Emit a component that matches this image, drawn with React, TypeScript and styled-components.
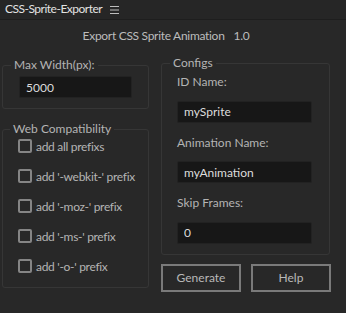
import React, { useState } from "react";
import styled, { createGlobalStyle } from "styled-components";

const GlobalStyle = createGlobalStyle`
  html, body {
    margin: 0;
    padding: 0;
    background: #282828;
  }
  body {
    font-family: Lato, "Open Sans", sans-serif;
    color: #b4b4b4;
  }
`;

const Panel = styled.div`
  width: 346px;
  height: 313px;
  overflow: hidden;
  background: #282828;
`;

const Header = styled.header`
  display: flex;
  align-items: flex-start;
  gap: 8px;
  height: 20px;
  padding: 2px 0 0 5px;
  box-sizing: border-box;
  border-bottom: 1px solid #1e1e1e;
  background: #262626;
`;

const HeaderTitle = styled.span`
  font-size: 12px;
  line-height: 13px;
  letter-spacing: -0.5px;
  color: #e2e2e2;
`;

const MenuIcon = styled.svg`
  margin-top: 4px;
`;

const Title = styled.div`
  display: flex;
  justify-content: center;
  gap: 9px;
  padding: 8px 14px 0 0;
  height: 22px;
  font-size: 12px;
  line-height: 16px;
  letter-spacing: -0.3px;
  color: #bcbcbc;
`;

const Columns = styled.div`
  display: grid;
  grid-template-columns: 147px 169px;
  column-gap: 12px;
  padding: 6px 0 0 2px;
`;

const Column = styled.div<{ $offset?: number }>`
  display: flex;
  flex-direction: column;
  padding-top: ${(p) => p.$offset ?? 0}px;
`;

const Group = styled.fieldset<{ $pad: string }>`
  margin: 0;
  min-width: 0;
  padding: ${(p) => p.$pad};
  border: 1px solid #363636;
  border-radius: 3px;
  display: flex;
  flex-direction: column;
`;

const Legend = styled.legend<{ $shift: number }>`
  margin-left: ${(p) => p.$shift}px;
  padding: 0 3px;
  font-size: 12px;
  line-height: 14px;
  color: #b4b4b4;
`;

const FieldLabel = styled.label`
  display: block;
  height: 20px;
  font-size: 12px;
  line-height: 20px;
  margin-bottom: 8px;
`;

const TextInput = styled.input`
  box-sizing: border-box;
  width: 100%;
  height: 22px;
  padding: 0 6px;
  border: 1px solid #222;
  border-radius: 2px;
  background: #171717;
  color: #dcdcdc;
  font-family: Lato, "Open Sans", sans-serif;
  font-size: 12px;
  outline: none;
`;

const Field = styled.div`
  & + & {
    margin-top: 10px;
  }
`;

const CheckRow = styled.label`
  display: flex;
  align-items: center;
  gap: 4px;
  height: 20px;
  font-size: 12px;
  letter-spacing: -0.3px;
  white-space: nowrap;
  color: #b4b4b4;
  & + & {
    margin-top: 10px;
  }
`;

const Box = styled.span<{ $on: boolean }>`
  flex: none;
  box-sizing: border-box;
  width: 14px;
  height: 14px;
  border: 2px solid #858585;
  border-radius: 2px;
  background: ${(p) => (p.$on ? "#858585" : "transparent")};
`;

const Buttons = styled.div`
  display: grid;
  grid-template-columns: 80px 80px;
  column-gap: 10px;
  margin-top: 9px;
`;

const Button = styled.button`
  height: 28px;
  border: 2px solid #7a7a7a;
  border-radius: 0;
  background: #282828;
  color: #b8b8b8;
  font-family: Lato, "Open Sans", sans-serif;
  font-size: 12px;
  padding: 0;
`;

const prefixes = [
  "add all prefixs",
  "add '-webkit-' prefix",
  "add '-moz-' prefix",
  "add '-ms-' prefix",
  "add '-o-' prefix",
];

export default function App() {
  const [checked, setChecked] = useState<boolean[]>(prefixes.map(() => false));

  const toggle = (i: number) =>
    setChecked((c) => c.map((v, j) => (j === i ? !v : v)));

  return (
    <Panel>
      <GlobalStyle />
      <Header>
        <HeaderTitle>CSS-Sprite-Exporter</HeaderTitle>
        <MenuIcon width="9" height="8" viewBox="0 0 9 8">
          <path d="M0 0.5H9M0 4H9M0 7.5H9" stroke="#bdbdbd" strokeWidth="1" />
        </MenuIcon>
      </Header>
      <Title>
        <span>Export CSS Sprite Animation</span>
        <span>1.0</span>
      </Title>
      <Columns>
        <Column $offset={2}>
          <Group $pad="4px 16px 10px 16px">
            <Legend $shift={-8}>Max Width(px):</Legend>
            <TextInput defaultValue="5000" />
          </Group>
          <Group $pad="0 6px 11px 15px" style={{ marginTop: 13 }}>
            <Legend $shift={-8}>Web Compatibility</Legend>
            {prefixes.map((p, i) => (
              <CheckRow key={p} onClick={() => toggle(i)}>
                <Box $on={checked[i]} />
                {p}
              </CheckRow>
            ))}
          </Group>
        </Column>
        <Column>
          <Group $pad="2px 17px 10px 15px">
            <Legend $shift={-7}>Configs</Legend>
            <Field>
              <FieldLabel>ID Name:</FieldLabel>
              <TextInput defaultValue="mySprite" />
            </Field>
            <Field>
              <FieldLabel>Animation Name:</FieldLabel>
              <TextInput defaultValue="myAnimation" />
            </Field>
            <Field>
              <FieldLabel>Skip Frames:</FieldLabel>
              <TextInput defaultValue="0" />
            </Field>
          </Group>
          <Buttons>
            <Button>Generate</Button>
            <Button>Help</Button>
          </Buttons>
        </Column>
      </Columns>
    </Panel>
  );
}
